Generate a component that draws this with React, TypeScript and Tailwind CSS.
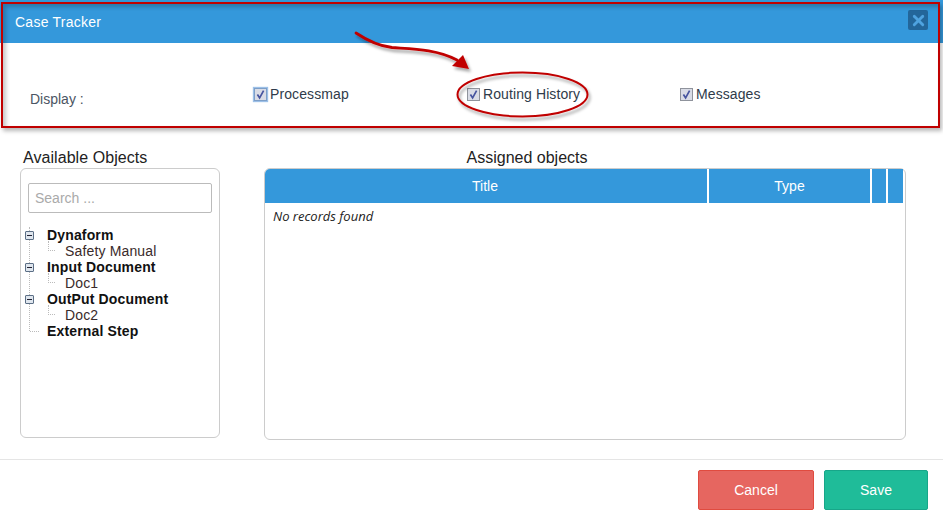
import { X } from 'lucide-react'

function Tick({ focused }: { focused?: boolean }) {
  return (
    <span
      className={`flex h-[13px] w-[13px] shrink-0 items-center justify-center border bg-[#d9dce6] ${
        focused ? 'border-[#7d9fc8] shadow-[0_0_1px_1px_#9dc0e8]' : 'border-[#8f939c]'
      }`}
    >
      <svg viewBox="0 0 11 11" className="h-[11px] w-[11px]">
        <path d="M2.4 5.6 L4.6 8.8 L8.6 1.6" fill="none" stroke="#46549f" strokeWidth="1.7" />
      </svg>
    </span>
  )
}

function DisplayOption({ label, focused }: { label: string; focused?: boolean }) {
  return (
    <div className="flex w-[213px] items-center gap-[3px] text-[14px] leading-[16px] tracking-[0.1px] text-[#2f3b4a]">
      <Tick focused={focused} />
      <span>{label}</span>
    </div>
  )
}

function TreeGroup({ label, child }: { label: string; child?: string }) {
  return (
    <div>
      <div className="relative flex h-[16px] items-center pl-[27px] font-bold tracking-[0.15px] text-[#111]">
        {child ? (
          <span className="absolute top-[4px] left-[5px] z-10 flex h-[9px] w-[9px] items-center justify-center rounded-[1px] border border-[#5c6f86] bg-[#dfe6ee]">
            <span className="h-px w-[5px] bg-[#223]" />
          </span>
        ) : (
          <span className="absolute top-[8px] left-[10px] w-[9px] border-t border-dotted border-[#bbb]" />
        )}
        {label}
      </div>
      {child && (
        <div className="relative flex h-[16px] items-center pl-[45px] tracking-[0.15px] text-[#3a2b2b]">
          <span className="absolute top-[-2px] left-[28px] h-[10px] w-[7px] border-b border-l border-dotted border-[#bbb]" />
          {child}
        </div>
      )}
    </div>
  )
}

function Annotations() {
  return (
    <>
      <div className="pointer-events-none absolute top-[2px] left-[1px] h-[126px] w-[939px] border-2 border-[#c00000] shadow-[2px_3px_4px_rgba(0,0,0,0.28),inset_3px_3px_4px_rgba(0,0,0,0.22)]" />
      <svg className="pointer-events-none absolute top-0 left-0 h-[130px] w-[943px]" viewBox="0 0 943 130">
        <defs>
          <filter id="soft" x="-20%" y="-20%" width="140%" height="150%">
            <feDropShadow dx="2" dy="3" stdDeviation="1.6" floodColor="#000" floodOpacity="0.35" />
          </filter>
        </defs>
        <g filter="url(#soft)">
          <path
            d="M356 33 C368 41 378 46 392 47.5 C412 49 436 49 457 60"
            fill="none"
            stroke="#c00000"
            strokeWidth="2.8"
            strokeLinecap="round"
          />
          <path d="M452 66 L463 55 L469 69 Z" fill="#c00000" />
          <ellipse cx="522.5" cy="94.5" rx="65" ry="22" fill="none" stroke="#c00000" strokeWidth="2" />
        </g>
      </svg>
    </>
  )
}

export default function App() {
  return (
    <div className="relative h-[520px] w-[943px] overflow-hidden bg-white font-['Liberation_Sans',Arial,sans-serif] text-[14px]">
      <header className="flex h-[43px] items-center justify-between bg-[#3498db] px-[15px] text-white">
        <span className="relative top-[1px] text-[14px] tracking-[0.25px]">Case Tracker</span>
        <button
          type="button"
          aria-label="Close"
          className="mb-[3px] flex h-[20px] w-[20px] items-center justify-center rounded-[2px] bg-[#23669a]"
        >
          <X size={17} strokeWidth={4} color="#4fa3e0" />
        </button>
      </header>

      <section className="flex h-[84px] items-start pt-[43px] pl-[254px]">
        <DisplayOption label="Processmap" focused />
        <DisplayOption label="Routing History" />
        <DisplayOption label="Messages" />
      </section>
      <span className="absolute top-[91px] left-[30px] text-[14px] leading-[16px] text-[#4b5563]">Display :</span>

      <section className="flex items-start pt-[21px] pl-[20px]">
        <div className="w-[200px]">
          <h3 className="h-[20px] pt-[1px] pl-[3px] text-[16px] leading-[18px] tracking-[0.06px] text-[#222]">
            Available Objects
          </h3>
          <div className="h-[270px] rounded-[6px] border border-[#ccc] px-[7px] pt-[14px]">
            <input
              placeholder="Search ..."
              readOnly
              className="h-[30px] w-full rounded-[2px] border border-[#bbb] px-[6px] text-[14px] outline-none placeholder:text-[#aaa]"
            />
            <div className="relative mt-[14px] ml-[-8px] text-[14px] leading-[16px]">
              <span className="absolute top-0 left-[9px] h-[104px] border-l border-dotted border-[#bbb]" />
              <TreeGroup label="Dynaform" child="Safety Manual" />
              <TreeGroup label="Input Document" child="Doc1" />
              <TreeGroup label="OutPut Document" child="Doc2" />
              <TreeGroup label="External Step" />
            </div>
          </div>
        </div>

        <div className="ml-[44px] w-[642px]">
          <h3 className="h-[20px] pt-[1px] pr-[116px] text-center text-[16px] leading-[18px] text-[#222]">
            Assigned objects
          </h3>
          <div className="h-[272px] rounded-[6px] border border-[#ccc]">
            <div className="flex h-[34px] w-[638px] gap-[2px] text-[14px] text-white">
              <div className="flex w-[442px] items-center justify-center rounded-tl-[5px] bg-[#3498db] pr-[2px]">
                Title
              </div>
              <div className="flex w-[161px] items-center justify-center bg-[#3498db]">Type</div>
              <div className="w-[14px] bg-[#3498db]" />
              <div className="w-[15px] bg-[#3498db]" />
            </div>
            <p className="pt-[4px] pl-[8px] font-['Open_Sans',sans-serif] text-[13px] leading-[18px] text-[#222] italic">
              No records found
            </p>
          </div>
        </div>
      </section>

      <footer className="mt-[19px] flex h-[61px] items-start justify-end gap-[10px] border-t border-[#e5e5e5] pt-[10px] pr-[15px]">
        <button
          type="button"
          className="h-[40px] w-[116px] rounded-[2px] border border-[#e04b3f] bg-[#e66660] text-[14px] text-white"
        >
          Cancel
        </button>
        <button
          type="button"
          className="h-[40px] w-[104px] rounded-[2px] border border-[#18a689] bg-[#1fbc99] text-[14px] text-white"
        >
          Save
        </button>
      </footer>

      <Annotations />
    </div>
  )
}
